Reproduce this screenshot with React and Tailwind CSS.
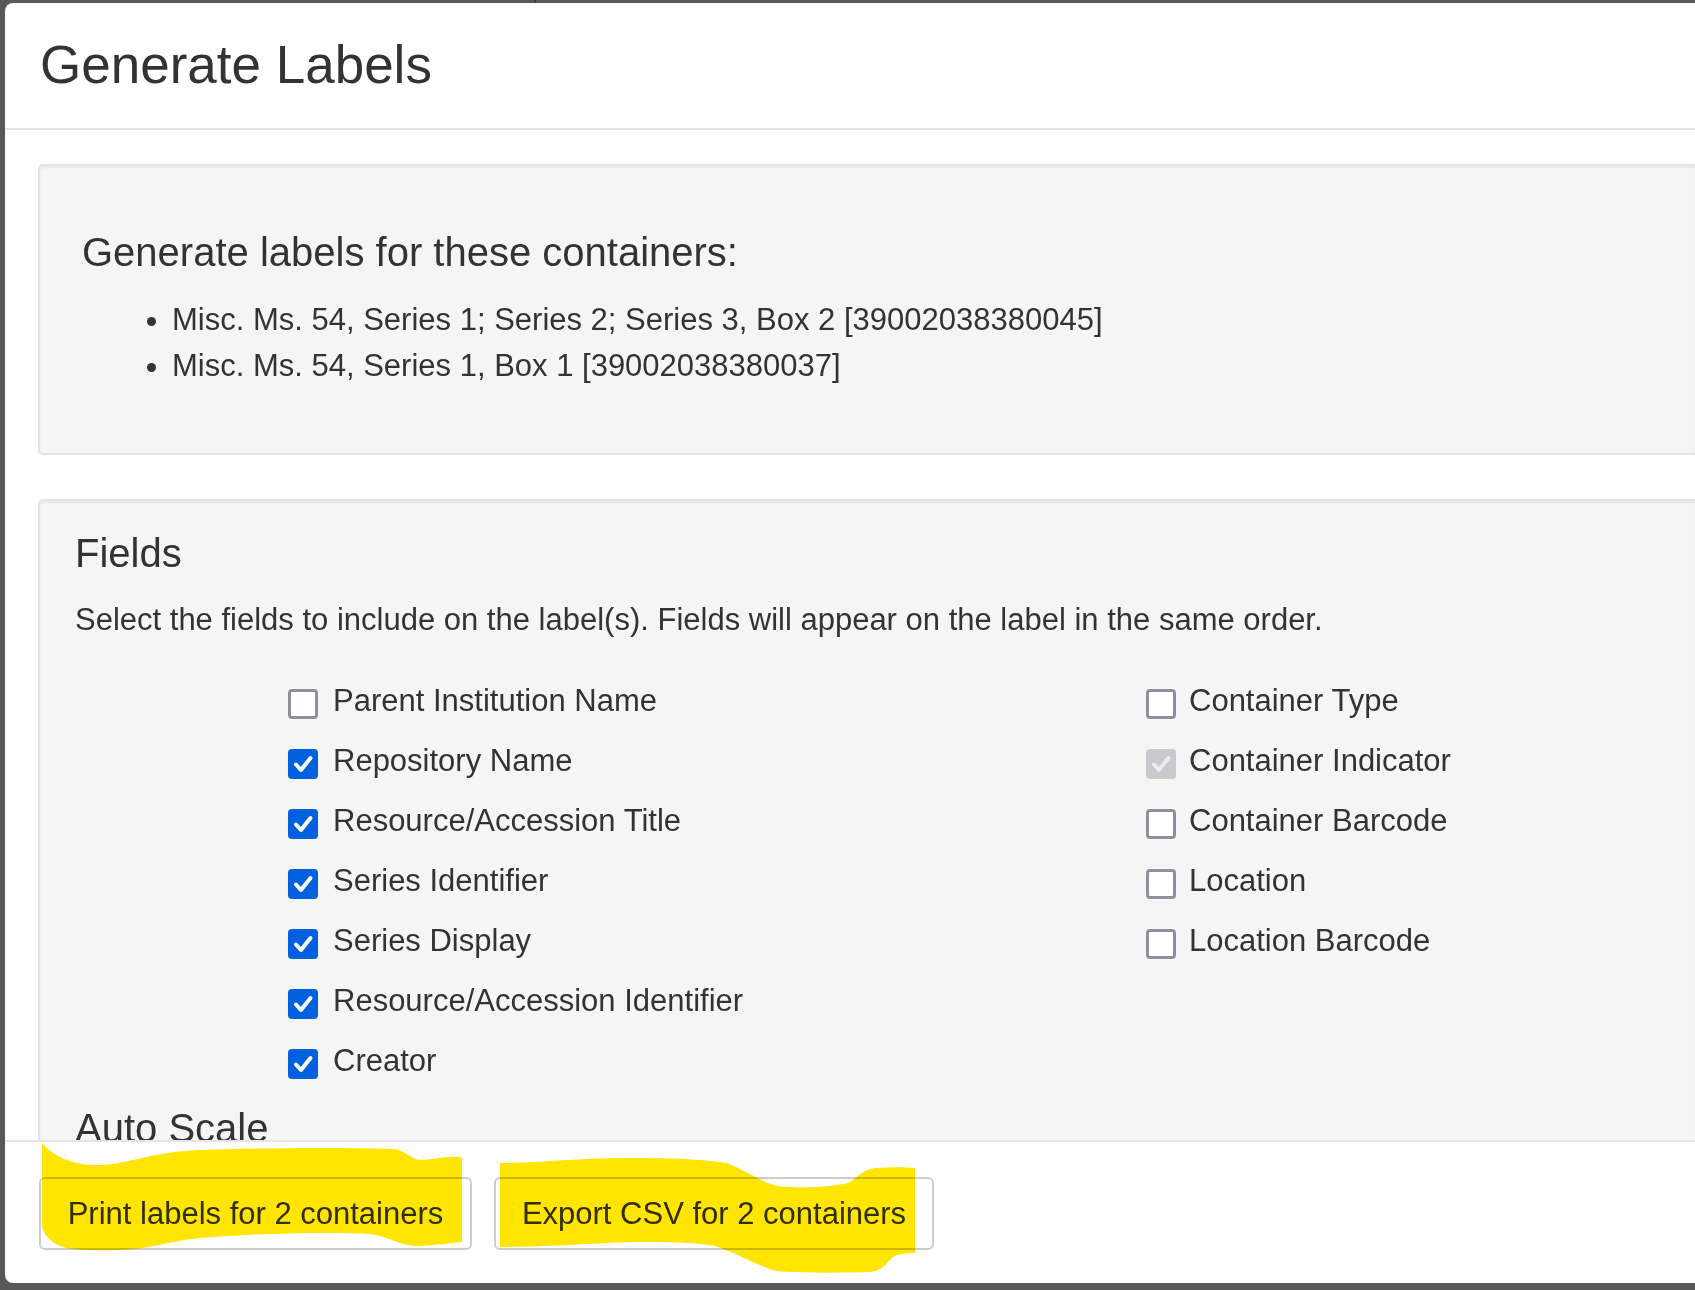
import React from "react";

function Box({ state }) {
  if (state === "off") {
    return (
      <div className="w-[30px] h-[30px] shrink-0 rounded-[4px] border-[3px] border-[#8f8f9d] bg-white mt-[18px]" />
    );
  }
  const bg = state === "on" ? "bg-[#0060df]" : "bg-[#c9c9ce]";
  const stroke = state === "on" ? "#ffffff" : "#ececef";
  return (
    <div className={`w-[30px] h-[30px] shrink-0 rounded-[4px] ${bg} mt-[18px] flex items-center justify-center`}>
      <svg width="30" height="30" viewBox="0 0 30 30">
        <path d="M8 15.5 L13 21 L22.5 9" fill="none" stroke={stroke} strokeWidth="4" strokeLinecap="round" strokeLinejoin="round" />
      </svg>
    </div>
  );
}

function Row({ state, label, right }) {
  return (
    <div className="flex h-[60px]">
      <Box state={state} />
      <span className={`mt-[7px] leading-[46px] ${right ? "ml-[13px]" : "ml-[15px]"}`}>{label}</span>
    </div>
  );
}

export default function App() {
  const left = [
    ["off", "Parent Institution Name"],
    ["on", "Repository Name"],
    ["on", "Resource/Accession Title"],
    ["on", "Series Identifier"],
    ["on", "Series Display"],
    ["on", "Resource/Accession Identifier"],
    ["on", "Creator"],
  ];
  const right = [
    ["off", "Container Type"],
    ["disabled", "Container Indicator"],
    ["off", "Container Barcode"],
    ["off", "Location"],
    ["off", "Location Barcode"],
  ];
  return (
    <div className="relative w-[1695px] h-[1290px] overflow-hidden bg-[#585858] pt-[3px] pl-[5px] font-['Liberation_Sans',Arial,sans-serif] text-[#333333]">
      <div className="absolute left-[534px] top-0 w-[2px] h-[3px] bg-[#3c3c3c]" />
      <div className="h-[1280px] bg-white rounded-l-[8px] flex flex-col overflow-hidden">
        {/* header */}
        <div className="h-[127px] shrink-0 border-b-2 border-[#e5e5e5] pt-[33px] pl-[35px]">
          <h3 className="text-[53px] leading-[58px] font-normal">Generate Labels</h3>
        </div>
        {/* body */}
        <div className="flex-1 overflow-hidden pt-[34px] pl-[33px]">
          <div className="h-[291px] bg-[#f5f5f5] border-2 border-r-0 border-[#e3e3e3] rounded-l-[5px] shadow-[inset_0_2px_2px_rgba(0,0,0,0.05)] pt-[64px] pl-[42px]">
            <h4 className="text-[40px] leading-[44px] font-normal">Generate labels for these containers:</h4>
            <ul className="list-disc pl-[90px] mt-[23px] text-[31px] leading-[46px]">
              <li>Misc. Ms. 54, Series 1; Series 2; Series 3, Box 2 [39002038380045]</li>
              <li>Misc. Ms. 54, Series 1, Box 1 [39002038380037]</li>
            </ul>
          </div>
          <div className="mt-[44px] h-[800px] bg-[#f5f5f5] border-2 border-r-0 border-b-0 border-[#e3e3e3] rounded-tl-[5px] shadow-[inset_0_2px_2px_rgba(0,0,0,0.05)] pt-[30px] pl-[35px]">
            <h4 className="text-[40px] leading-[44px] font-normal">Fields</h4>
            <p className="mt-[22px] text-[31px] leading-[46px]">
              Select the fields to include on the label(s). Fields will appear on the label in the same order.
            </p>
            <div className="mt-[28px] ml-[213px] grid grid-cols-[858px_auto] text-[31px]">
              <div className="flex flex-col">
                {left.map(([s, l]) => (
                  <Row key={l} state={s} label={l} />
                ))}
              </div>
              <div className="flex flex-col">
                {right.map(([s, l]) => (
                  <Row key={l} state={s} label={l} right />
                ))}
              </div>
            </div>
            <h4 className="mt-[15px] text-[40px] leading-[44px] font-normal">Auto Scale</h4>
          </div>
        </div>
        {/* footer */}
        <div className="h-[143px] shrink-0 border-t-2 border-[#e5e5e5] pt-[35px] pl-[34px] flex gap-[22px]">
          <button className="h-[73px] w-[433px] border-2 border-[#cccccc] rounded-[6px] bg-white text-[31px] text-[#333333] leading-[44px]">
            Print labels for 2 containers
          </button>
          <button className="h-[73px] w-[440px] border-2 border-[#cccccc] rounded-[6px] bg-white text-[31px] text-[#333333] leading-[44px]">
            Export CSV for 2 containers
          </button>
        </div>
      </div>
      <svg className="absolute left-0 top-0 mix-blend-multiply pointer-events-none" width="1695" height="1290" viewBox="0 0 1695 1290">
        <path
          fill="#ffe500"
          d="M42 1143 C55 1158 75 1166 100 1165 C130 1164 150 1152 200 1150 C260 1148 330 1147 394 1149 C405 1150 412 1160 420 1160 C432 1160 442 1156 462 1157 L462 1242 C450 1243 438 1245 420 1246 C400 1247 390 1236 370 1234 C330 1232 260 1233 200 1238 C170 1241 150 1249 120 1250 C90 1251 70 1250 60 1246 C50 1242 42 1232 42 1225 Z"
        />
        <path
          fill="#ffe500"
          d="M500 1163 C540 1163 580 1158 620 1158 C670 1158 700 1159 727 1163 C745 1170 760 1182 778 1186 C800 1189 830 1187 848 1183 C858 1177 862 1170 875 1168 C890 1167 905 1167 915 1168 L915 1253 C905 1253 898 1254 893 1257 C886 1263 884 1270 870 1272 C840 1273 800 1273 776 1271 C755 1265 735 1252 715 1246 C695 1242 650 1241 606 1243 C570 1245 530 1247 500 1247 Z"
        />
      </svg>
    </div>
  );
}
